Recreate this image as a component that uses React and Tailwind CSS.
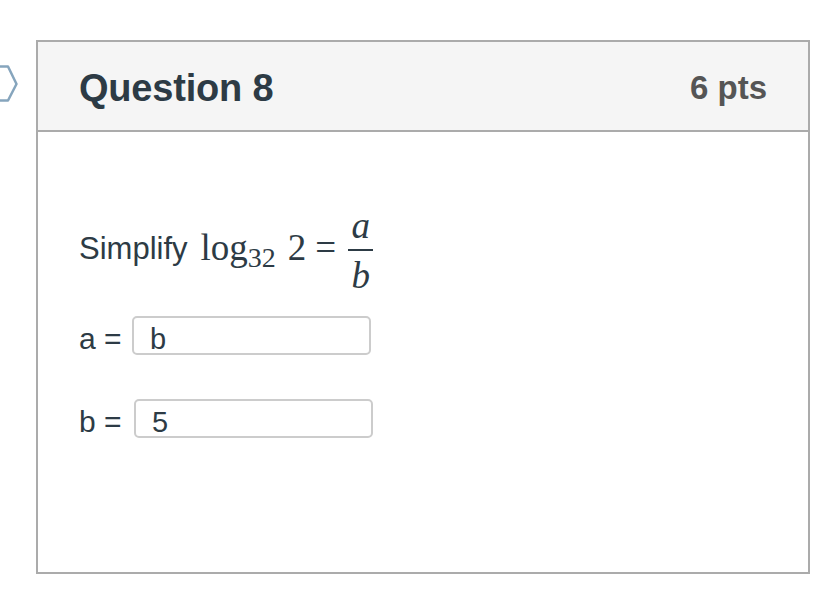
export default function App() {
  return (
    <div className="relative min-h-[600px] w-[818px] bg-white" style={{ fontFamily: '"Liberation Sans", Arial, sans-serif' }}>
      <svg className="absolute left-0 top-[64px]" width="22" height="40" viewBox="0 0 22 40">
        <path d="M-10 2.5 L8 2.5 L16.5 20 L8 36.5 L-10 36.5 Z" fill="none" stroke="#86a5bd" strokeWidth="2.5" strokeLinejoin="round" />
      </svg>

      <div className="pt-10 pl-9 pr-2">
        <div className="w-[774px] h-[534px] border-2 border-[#ababab] flex flex-col">
          <div className="h-[90px] bg-[#f5f5f5] border-b-2 border-[#ababab] flex items-center justify-between px-[41px] pt-[4px]">
            <h2 className="text-[38px] font-bold text-[#2d3b45] tracking-[-0.2px]">Question 8</h2>
            <span className="text-[33px] font-bold text-[#555555]">6 pts</span>
          </div>

          <div className="px-[41px] pt-[66px] text-[#2d3b45]">
            <div className="flex items-center h-[100px]">
              <span className="text-[31px] mt-[2px]">Simplify</span>
              <span className="ml-[13px] flex items-center" style={{ fontFamily: '"Liberation Serif", "DejaVu Serif", serif' }}>
                <span className="text-[37px]">log</span>
                <span className="text-[28px] mt-[20px]">32</span>
                <span className="text-[37px] ml-[12px]">2</span>
                <span className="text-[37px] ml-[9px]">=</span>
                <span className="ml-[12px] mt-[8px] flex flex-col items-center">
                  <span className="text-[37px] italic leading-[38px] mb-[4px]">a</span>
                  <span className="w-[25px] h-[2px] bg-[#2d3b45]"></span>
                  <span className="text-[37px] italic leading-[42px] mt-[4px]">b</span>
                </span>
              </span>
            </div>

            <div className="mt-[18px] flex items-start text-[30px]">
              <span className="w-[53px] leading-[30px] mt-[8px]">a =</span>
              <div className="w-[239px] h-[39px] border-2 border-[#cccccc] rounded-[5px] px-[16px] pt-[6px] text-[29px] leading-[30px]">b</div>
            </div>

            <div className="mt-[44px] flex items-start text-[30px]">
              <span className="w-[55px] leading-[30px] mt-[8px]">b =</span>
              <div className="w-[239px] h-[39px] border-2 border-[#cccccc] rounded-[5px] px-[16px] pt-[6px] text-[29px] leading-[30px]">5</div>
            </div>
          </div>
        </div>
      </div>
    </div>
  );
}
